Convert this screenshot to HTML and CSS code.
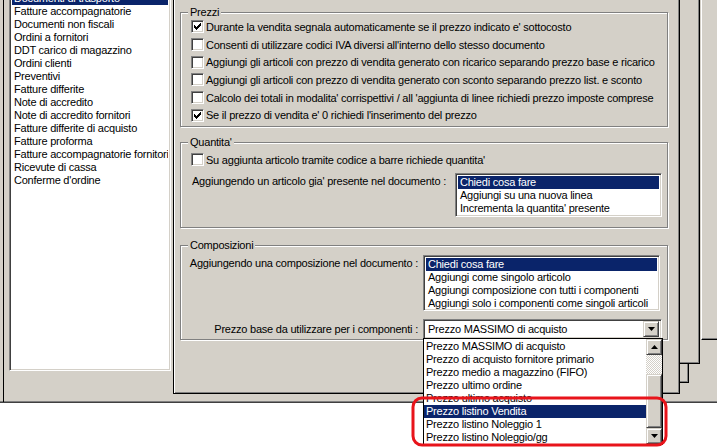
FILE: index.html
```html
<!DOCTYPE html>
<html>
<head>
<meta charset="utf-8">
<link rel="stylesheet" href="styles.css">
</head>
<body>
<div class="screen">
  <div class="window">
    <div class="sidebar">
      <ul class="doclist">
        <li class="sel">Documenti di trasporto</li>
        <li>Fatture accompagnatorie</li>
        <li>Documenti non fiscali</li>
        <li>Ordini a fornitori</li>
        <li>DDT carico di magazzino</li>
        <li>Ordini clienti</li>
        <li>Preventivi</li>
        <li>Fatture differite</li>
        <li>Note di accredito</li>
        <li>Note di accredito fornitori</li>
        <li>Fatture differite di acquisto</li>
        <li>Fatture proforma</li>
        <li>Fatture accompagnatorie fornitori</li>
        <li>Ricevute di cassa</li>
        <li>Conferme d'ordine</li>
      </ul>
    </div>
    <div class="stage">
      <div class="stackframe f1"></div>
      <div class="stackframe f2"></div>
      <div class="stackframe f3"></div>
      <div class="panel">
        <div class="group g-prezzi">
          <span class="legend">Prezzi</span>
          <div class="check"><span class="box on"><svg viewBox="0 0 7 7" width="7" height="7"><path d="M0 2h1v1h1v1h1v-1h1v-1h1v-1h1v-1h1v3h-1v1h-1v1h-1v1h-1v1h-1v-1h-1v-1h-1z" fill="#000"/></svg></span><span>Durante la vendita segnala automaticamente se il prezzo indicato e' sottocosto</span></div>
          <div class="check"><span class="box"></span><span>Consenti di utilizzare codici IVA diversi all'interno dello stesso documento</span></div>
          <div class="check"><span class="box"></span><span>Aggiungi gli articoli con prezzo di vendita generato con ricarico separando prezzo base e ricarico</span></div>
          <div class="check"><span class="box"></span><span>Aggiungi gli articoli con prezzo di vendita generato con sconto separando prezzo list. e sconto</span></div>
          <div class="check"><span class="box"></span><span>Calcolo dei totali in modalita' corrispettivi / all 'aggiunta di linee richiedi prezzo imposte comprese</span></div>
          <div class="check"><span class="box on"><svg viewBox="0 0 7 7" width="7" height="7"><path d="M0 2h1v1h1v1h1v-1h1v-1h1v-1h1v-1h1v3h-1v1h-1v1h-1v1h-1v1h-1v-1h-1v-1h-1z" fill="#000"/></svg></span><span>Se il prezzo di vendita e' 0 richiedi l'inserimento del prezzo</span></div>
        </div>

        <div class="group g-qta">
          <span class="legend">Quantita'</span>
          <div class="check"><span class="box"></span><span>Su aggiunta articolo tramite codice a barre richiede quantita'</span></div>
          <div class="field f-qta">
            <span class="flabel">Aggiungendo un articolo gia' presente nel documento :</span>
            <ul class="listbox lb-qta">
              <li class="sel">Chiedi cosa fare</li>
              <li>Aggiungi su una nuova linea</li>
              <li>Incrementa la quantita' presente</li>
            </ul>
          </div>
        </div>

        <div class="group g-comp">
          <span class="legend">Composizioni</span>
          <div class="field f-comp">
            <span class="flabel">Aggiungendo una composizione nel documento :</span>
            <ul class="listbox lb-comp">
              <li class="sel">Chiedi cosa fare</li>
              <li>Aggiungi come singolo articolo</li>
              <li>Aggiungi composizione con tutti i componenti</li>
              <li>Aggiungi solo i componenti come singoli articoli</li>
            </ul>
          </div>
          <div class="field f-combo">
            <span class="flabel">Prezzo base da utilizzare per i componenti :</span>
            <div class="combo">
              <span class="combo-text">Prezzo MASSIMO di acquisto</span>
              <span class="btn"><svg viewBox="0 0 7 4" width="7" height="4"><path d="M0 0h7l-3.5 4z" fill="#000"/></svg></span>
            </div>
          </div>
        </div>
      </div>
    </div>
  </div>

  <div class="dropdown">
    <ul class="ddlist">
      <li>Prezzo MASSIMO di acquisto</li>
      <li>Prezzo di acquisto fornitore primario</li>
      <li>Prezzo medio a magazzino (FIFO)</li>
      <li>Prezzo ultimo ordine</li>
      <li>Prezzo ultimo acquisto</li>
      <li class="sel">Prezzo listino Vendita</li>
      <li>Prezzo listino Noleggio 1</li>
      <li>Prezzo listino Noleggio/gg</li>
    </ul>
    <div class="vscroll">
      <span class="btn"><svg viewBox="0 0 7 4" width="7" height="4"><path d="M0 4h7l-3.5-4z" fill="#000"/></svg></span>
      <span class="track"></span>
      <span class="thumb"></span>
      <span class="btn"><svg viewBox="0 0 7 4" width="7" height="4"><path d="M0 0h7l-3.5 4z" fill="#000"/></svg></span>
    </div>
  </div>

  <svg class="highlight" width="258" height="52" viewBox="0 0 258 52"><rect x="2" y="2" width="253" height="47" rx="9" ry="9" fill="none" stroke="#e8141b" stroke-width="3"/></svg>
</div>
</body>
</html>
```

FILE: styles.css
```css
* { box-sizing: border-box; }
html, body { margin: 0; padding: 0; }
body {
  width: 717px;
  height: 447px;
  overflow: hidden;
  background: #fff;
  font-family: "Liberation Sans", Arial, sans-serif;
  font-size: 11px;
  letter-spacing: -0.22px;
  color: #000;
}
ul { list-style: none; margin: 0; padding: 0; }

.screen { position: relative; width: 717px; height: 447px; }

.window {
  display: flex;
  height: 403px;
  background: #d4d0c8;
  border-bottom: 1px solid #404040;
  box-shadow: inset 0 -1px 0 #808080;
  padding-left: 3px;
}

.sidebar {
  width: 170px;
  border-left: 1px solid #000;
  padding: 0 2px 0 5px;
}
.doclist {
  margin-top: -8px;
  height: 379px;
  background: #fff;
  border-left: 1px solid #808080;
  border-right: 1px solid #fff;
  border-bottom: 1px solid #fff;
  box-shadow: inset 1px 0 0 #404040, inset -1px 0 0 #d4d0c8, inset 0 -1px 0 #d4d0c8;
  padding: 0 2px 0 2px;
}
.doclist li {
  height: 13px;
  line-height: 13px;
  padding-left: 2px;
  white-space: nowrap;
  overflow: hidden;
}
.doclist li.sel { background: #0a246a; color: #fff; }

.stage {
  position: relative;
  flex: 1;
  height: 394px;
}
.panel {
  position: relative;
  width: 507px;
  height: 394px;
  border-left: 1px solid #000;
  border-bottom: 1px solid #000;
  border-right: 1px solid #000;
  box-shadow: inset 1px 0 0 #fff, inset -1px 0 0 #808080, inset 0 -1px 0 #808080;
  background: #d4d0c8;
  padding: 12px 0 0 6px;
}

.stackframe {
  position: absolute;
  top: 0;
  border-left: 1px solid #fff;
  border-right: 1px solid #000;
  border-bottom: 1px solid #000;
  box-shadow: inset -1px 0 0 #808080, inset 0 -1px 0 #808080;
  background: #d4d0c8;
}
.f1 { left: 496px; width: 20px; height: 383px; }
.f2 { left: 506px; width: 21px; height: 364px; }
.f3 { left: 528px; width: 20px; height: 340px; }

.group {
  position: relative;
  width: 488px;
  border: 1px solid #808080;
  box-shadow: inset 1px 1px 0 #fff, 1px 1px 0 #fff;
}
.legend {
  position: absolute;
  top: -7px;
  left: 7px;
  padding: 0 2px;
  background: #d4d0c8;
  line-height: 13px;
}
.g-prezzi { height: 115px; padding: 5px 0 0 10px; }
.g-qta { margin-top: 15px; height: 86px; padding: 10px 0 0 10px; }
.g-comp { margin-top: 17px; height: 95px; padding: 9px 0 0 0; }

.check {
  display: flex;
  align-items: center;
  height: 17.7px;
  white-space: nowrap;
}
.check .box {
  flex: none;
  width: 13px;
  height: 13px;
  margin-right: 2px;
  background: #fff;
  border-top: 1px solid #808080;
  border-left: 1px solid #808080;
  border-right: 1px solid #fff;
  border-bottom: 1px solid #fff;
  box-shadow: inset 1px 1px 0 #404040, inset -1px -1px 0 #d4d0c8;
  display: flex;
  align-items: center;
  justify-content: center;
}
.check .box svg { display: block; }
.g-qta .check { height: 13px; }

.field { display: flex; align-items: flex-start; }
.flabel { white-space: nowrap; }
.f-qta { margin-top: 7px; padding-left: 1px; }
.f-qta .flabel { margin-top: 2px; }
.f-comp { justify-content: flex-end; padding-right: 7px; }
.f-comp .flabel { margin-top: 2px; margin-right: 5px; }
.f-combo { justify-content: flex-end; padding-right: 5px; margin-top: 8px; align-items: center; }
.f-combo .flabel { margin-right: 5px; }

.listbox {
  background: #fff;
  border-top: 1px solid #808080;
  border-left: 1px solid #808080;
  border-right: 1px solid #fff;
  border-bottom: 1px solid #fff;
  box-shadow: inset 1px 1px 0 #404040, inset -1px -1px 0 #d4d0c8;
  padding: 2px;
}
.listbox li {
  height: 13px;
  line-height: 13px;
  padding-left: 2px;
  white-space: nowrap;
}
.listbox li.sel { background: #0a246a; color: #fff; }
.lb-qta { margin-left: auto; margin-right: 5px; width: 207px; height: 44px; }
.lb-comp { width: 237px; height: 56px; }

.combo {
  width: 239px;
  height: 20px;
  background: #fff;
  border-top: 1px solid #808080;
  border-left: 1px solid #808080;
  border-right: 1px solid #fff;
  border-bottom: 1px solid #fff;
  box-shadow: inset 1px 1px 0 #404040, inset -1px -1px 0 #d4d0c8;
  display: flex;
  align-items: center;
  padding: 2px;
}
.combo-text { flex: 1; padding-left: 2px; line-height: 13px; }
.btn {
  flex: none;
  width: 16px;
  height: 16px;
  background: #d4d0c8;
  border-top: 1px solid #d4d0c8;
  border-left: 1px solid #d4d0c8;
  border-right: 1px solid #404040;
  border-bottom: 1px solid #404040;
  box-shadow: inset 1px 1px 0 #fff, inset -1px -1px 0 #808080;
  display: flex;
  align-items: center;
  justify-content: center;
}
.btn svg { display: block; }

.dropdown {
  position: absolute;
  left: 423px;
  top: 338px;
  width: 240px;
  height: 107px;
  background: #fff;
  border: 1px solid #000;
  display: flex;
}
.ddlist { flex: 1; padding-top: 1px; }
.ddlist li {
  height: 13px;
  line-height: 13px;
  padding-left: 2px;
  white-space: nowrap;
}
.ddlist li.sel { background: #0a246a; color: #fff; }
.vscroll {
  width: 16px;
  display: flex;
  flex-direction: column;
}
.vscroll .track {
  height: 19px;
  background-color: #fff;
  background-image:
    linear-gradient(45deg, #d4d0c8 25%, transparent 25%, transparent 75%, #d4d0c8 75%),
    linear-gradient(45deg, #d4d0c8 25%, transparent 25%, transparent 75%, #d4d0c8 75%);
  background-size: 2px 2px;
  background-position: 0 0, 1px 1px;
}
.vscroll .thumb {
  flex: 1;
  background: #d4d0c8;
  border-top: 1px solid #d4d0c8;
  border-left: 1px solid #d4d0c8;
  border-right: 1px solid #404040;
  border-bottom: 1px solid #404040;
  box-shadow: inset 1px 1px 0 #fff, inset -1px -1px 0 #808080;
}

.highlight {
  position: absolute;
  left: 411px;
  top: 396px;
}
```
